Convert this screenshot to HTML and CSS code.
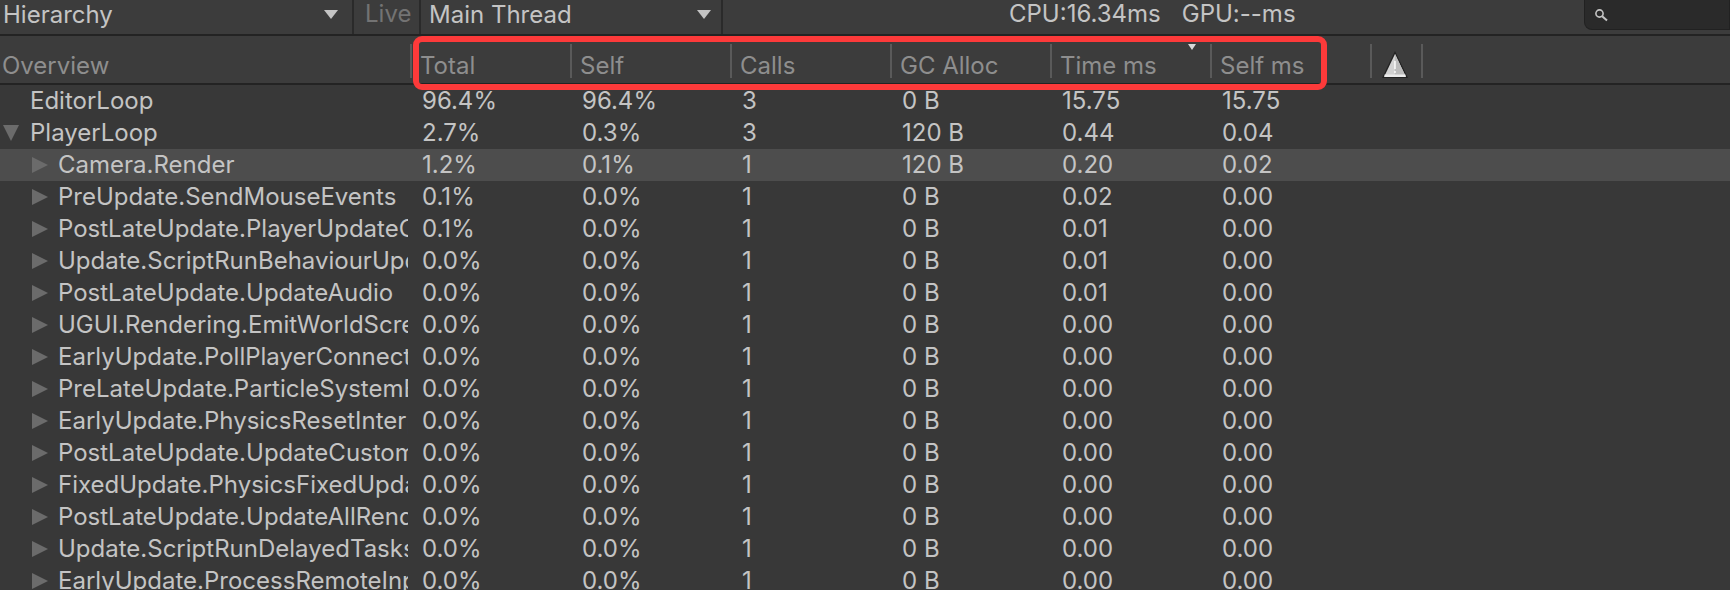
FILE: index.html
```html
<!DOCTYPE html>
<html lang="en">
<head>
    <meta charset="UTF-8">
    <title>Profiler - Hierarchy</title>
    <link rel="stylesheet" href="styles.css">
</head>
<body>
    <div class="toolbar">
        <div class="drop drop-view"><span>Hierarchy</span><i class="caret"></i></div>
        <div class="live">Live</div>
        <div class="drop drop-thread"><span>Main Thread</span><i class="caret"></i></div>
        <div class="timing"><span>CPU:16.34ms</span><span>GPU:--ms</span></div>
        <div class="search">
            <svg width="16" height="16" viewBox="0 0 16 16"><circle cx="6.5" cy="6.5" r="3.6" fill="none" stroke="#c4c4c4" stroke-width="1.6"/><path d="M9.2 9.2L14 13.6" stroke="#c4c4c4" stroke-width="2"/></svg>
        </div>
    </div>

    <div class="head">
        <div class="hcell hcell-first">Overview</div>
        <div class="hcell">Total</div>
        <div class="hcell">Self</div>
        <div class="hcell">Calls</div>
        <div class="hcell">GC Alloc</div>
        <div class="hcell sorted">Time ms</div>
        <div class="hcell">Self ms</div>
        <div class="hcell warn">
            <svg width="26" height="28" viewBox="0 0 26 28"><path d="M13 0L26 27H0Z" fill="#232323"/><path d="M13 3L24 26H2Z" fill="#d2d2d2"/><path d="M13 3L24 26H13Z" fill="#bdbdbd"/><path d="M2.5 23.5H23.5V26H2.5Z" fill="#ececec"/><path d="M12.3 10H13.7V18H12.3ZM12.3 20H13.7V22H12.3Z" fill="#fff"/></svg>
        </div>
        <div class="hcell hcell-end"></div>
    </div>

    <div class="row"><div class="name lvl0">EditorLoop</div><div>96.4%</div><div>96.4%</div><div>3</div><div>0 B</div><div>15.75</div><div>15.75</div></div>
    <div class="row"><div class="name lvl0 open"><i class="tri-down"></i>PlayerLoop</div><div>2.7%</div><div>0.3%</div><div>3</div><div>120 B</div><div>0.44</div><div>0.04</div></div>
    <div class="row selected"><div class="name"><i class="tri"></i><span>Camera.Render</span></div><div>1.2%</div><div>0.1%</div><div>1</div><div>120 B</div><div>0.20</div><div>0.02</div></div>
    <div class="row"><div class="name"><i class="tri"></i><span>PreUpdate.SendMouseEvents</span></div><div>0.1%</div><div>0.0%</div><div>1</div><div>0 B</div><div>0.02</div><div>0.00</div></div>
    <div class="row"><div class="name"><i class="tri"></i><span>PostLateUpdate.PlayerUpdateCanvases</span></div><div>0.1%</div><div>0.0%</div><div>1</div><div>0 B</div><div>0.01</div><div>0.00</div></div>
    <div class="row"><div class="name"><i class="tri"></i><span>Update.ScriptRunBehaviourUpdate</span></div><div>0.0%</div><div>0.0%</div><div>1</div><div>0 B</div><div>0.01</div><div>0.00</div></div>
    <div class="row"><div class="name"><i class="tri"></i><span>PostLateUpdate.UpdateAudio</span></div><div>0.0%</div><div>0.0%</div><div>1</div><div>0 B</div><div>0.01</div><div>0.00</div></div>
    <div class="row"><div class="name"><i class="tri"></i><span>UGUI.Rendering.EmitWorldScreenspaceCameraGeometry</span></div><div>0.0%</div><div>0.0%</div><div>1</div><div>0 B</div><div>0.00</div><div>0.00</div></div>
    <div class="row"><div class="name"><i class="tri"></i><span>EarlyUpdate.PollPlayerConnection</span></div><div>0.0%</div><div>0.0%</div><div>1</div><div>0 B</div><div>0.00</div><div>0.00</div></div>
    <div class="row"><div class="name"><i class="tri"></i><span>PreLateUpdate.ParticleSystemBeginUpdateAll</span></div><div>0.0%</div><div>0.0%</div><div>1</div><div>0 B</div><div>0.00</div><div>0.00</div></div>
    <div class="row"><div class="name"><i class="tri"></i><span>EarlyUpdate.PhysicsResetInterpolatedTransformPosition</span></div><div>0.0%</div><div>0.0%</div><div>1</div><div>0 B</div><div>0.00</div><div>0.00</div></div>
    <div class="row"><div class="name"><i class="tri"></i><span>PostLateUpdate.UpdateCustomRenderTextures</span></div><div>0.0%</div><div>0.0%</div><div>1</div><div>0 B</div><div>0.00</div><div>0.00</div></div>
    <div class="row"><div class="name"><i class="tri"></i><span>FixedUpdate.PhysicsFixedUpdate</span></div><div>0.0%</div><div>0.0%</div><div>1</div><div>0 B</div><div>0.00</div><div>0.00</div></div>
    <div class="row"><div class="name"><i class="tri"></i><span>PostLateUpdate.UpdateAllRenderers</span></div><div>0.0%</div><div>0.0%</div><div>1</div><div>0 B</div><div>0.00</div><div>0.00</div></div>
    <div class="row"><div class="name"><i class="tri"></i><span>Update.ScriptRunDelayedTasks</span></div><div>0.0%</div><div>0.0%</div><div>1</div><div>0 B</div><div>0.00</div><div>0.00</div></div>
    <div class="row"><div class="name"><i class="tri"></i><span>EarlyUpdate.ProcessRemoteInput</span></div><div>0.0%</div><div>0.0%</div><div>1</div><div>0 B</div><div>0.00</div><div>0.00</div></div>

    <div class="callout"></div>
</body>
</html>
```

FILE: styles.css
```css
html, body {
    height: 100%;
}

body {
    margin: 0;
    position: relative;
    overflow: hidden;
    background: #383838;
    color: #c4c4c4;
    font-family: Inter, "Noto Sans", sans-serif;
    font-size: 24px;
}

/* top toolbar */
.toolbar {
    display: flex;
    height: 34px;
    background: #3c3c3c;
    border-bottom: 2px solid #232323;
}

.drop {
    display: flex;
    align-items: center;
    justify-content: space-between;
    box-sizing: border-box;
    height: 34px;
    padding-bottom: 6px;
    border-right: 2px solid #2a2a2a;
}

.drop-view {
    width: 354px;
    padding-left: 3px;
    padding-right: 14px;
}

.drop-thread {
    width: 302px;
    padding-left: 8px;
    padding-right: 10px;
}

.caret {
    width: 0;
    height: 0;
    border-left: 7px solid transparent;
    border-right: 7px solid transparent;
    border-top: 9px solid #c4c4c4;
}

.live {
    width: 67px;
    box-sizing: border-box;
    line-height: 28px;
    padding-left: 11px;
    color: #737373;
    border-right: 2px solid #2a2a2a;
}

.timing {
    width: 861px;
    display: flex;
    gap: 21px;
    padding-left: 286px;
    box-sizing: border-box;
    line-height: 28px;
    white-space: nowrap;
}

.search {
    flex: 1;
    height: 29px;
    background: #2a2a2a;
    border: 1px solid #212121;
    border-top: none;
    border-radius: 0 0 0 8px;
    display: flex;
    align-items: center;
    padding-left: 8px;
}

/* column headers */
.head {
    display: grid;
    grid-template-columns: 410px repeat(6, 160px) 51px 1fr;
    height: 47px;
    background: #3c3c3c;
    border-bottom: 2px solid #232323;
    color: #8e8e8e;
}

.hcell {
    position: relative;
    box-sizing: border-box;
    margin-top: 8px;
    height: 34px;
    line-height: 44px;
    padding-left: 8px;
    border-left: 2px solid #5a5a5a;
}

.hcell-first {
    border-left: none;
    padding-left: 2px;
}

.sorted::after {
    content: "";
    position: absolute;
    top: 0;
    right: 14px;
    border-left: 4px solid transparent;
    border-right: 4px solid transparent;
    border-top: 6px solid #d8d8d8;
}

.warn {
    padding: 7px 0 0 10px;
    line-height: 0;
}

/* tree rows */
.row {
    display: grid;
    grid-template-columns: 422px repeat(6, 160px);
    height: 32px;
    line-height: 32px;
    white-space: nowrap;
}

.selected {
    background: #4d4d4d;
}

.name {
    display: flex;
    align-items: center;
    width: 408px;
    overflow: hidden;
    padding-left: 58px;
    box-sizing: border-box;
}

.lvl0 {
    padding-left: 30px;
}

.open {
    padding-left: 3px;
}

.tri {
    flex: none;
    width: 0;
    height: 0;
    margin: 0 10px 0 -26px;
    border-top: 8px solid transparent;
    border-bottom: 8px solid transparent;
    border-left: 16px solid #6b6b6b;
}

.tri-down {
    flex: none;
    width: 0;
    height: 0;
    margin-right: 11px;
    border-left: 8px solid transparent;
    border-right: 8px solid transparent;
    border-top: 16px solid #6b6b6b;
}

/* red annotation drawn over the headers */
.callout {
    position: absolute;
    left: 413px;
    top: 36px;
    width: 914px;
    height: 54px;
    box-sizing: border-box;
    border: 6px solid #fd3a3a;
    border-radius: 9px;
}
```
